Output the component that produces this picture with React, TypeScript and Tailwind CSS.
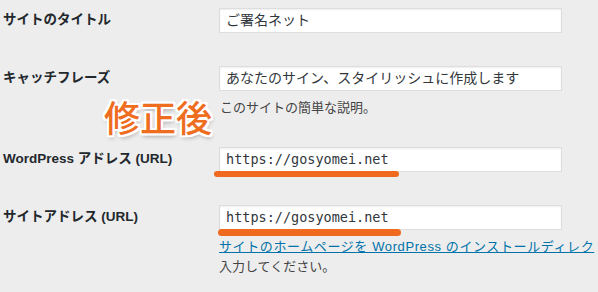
const SANS = "font-['Liberation_Sans','Noto_Sans_CJK_JP',sans-serif]";

function Field({
  label,
  value,
  mono,
  className,
}: {
  label: string;
  value: string;
  mono?: boolean;
  className?: string;
}) {
  return (
    <div className={`flex items-center ${className ?? ""}`}>
      <div className="w-[219px] pl-[3px] text-[13.5px] font-bold text-[#23282d]">{label}</div>
      <div
        className={`flex h-[25px] w-[343px] items-center border border-[#dddddd] bg-white px-[6px] text-[#32373c] shadow-[inset_0_1px_2px_rgba(0,0,0,0.07)] ${
          mono
            ? "font-['DejaVu_Sans_Mono',monospace] text-[13.5px]"
            : "text-[14px]"
        }`}
      >
        {value}
      </div>
    </div>
  );
}

export default function App() {
  return (
    <div className={`relative h-[292px] w-[598px] overflow-hidden bg-[#ededed] ${SANS}`}>
      <div className="pt-[8px]">
        <Field label="サイトのタイトル" value="ご署名ネット" />
        <Field
          label="キャッチフレーズ"
          value="あなたのサイン、スタイリッシュに作成します"
          className="mt-[33px]"
        />
        <p className="ml-[220px] mt-[7px] text-[13px] leading-[20px] text-[#444]">
          このサイトの簡単な説明。
        </p>
        <Field
          label="WordPress アドレス (URL)"
          value="https://gosyomei.net"
          mono
          className="mt-[29px]"
        />
        <Field
          label="サイトアドレス (URL)"
          value="https://gosyomei.net"
          mono
          className="mt-[33px]"
        />
        <div className="ml-[219px] mt-[7px] text-[13px] leading-[20px]">
          <a className="block whitespace-nowrap tracking-[0.6px] text-[#0073aa] underline">
            サイトのホームページを WordPress のインストールディレク
          </a>
          <p className="text-[#444]">入力してください。</p>
        </div>
      </div>

      {/* annotation */}
      <div className="absolute left-[104px] top-[98px] font-['Noto_Sans_CJK_JP',sans-serif] text-[36px] font-medium leading-none text-[#ef6d1f] [text-shadow:2px_0_0_#fff,-2px_0_0_#fff,0_2px_0_#fff,0_-2px_0_#fff,2px_2px_0_#fff,-2px_-2px_0_#fff,2px_-2px_0_#fff,-2px_2px_0_#fff,1px_3px_4px_rgba(0,0,0,0.35)]">
        修正後
      </div>
      <div className="absolute left-[214px] top-[171px] h-[6px] w-[185px] rounded-full bg-[#ef6a1f]" />
      <div className="absolute left-[218px] top-[229px] h-[7px] w-[183px] rounded-full bg-[#ef6a1f]" />
    </div>
  );
}
